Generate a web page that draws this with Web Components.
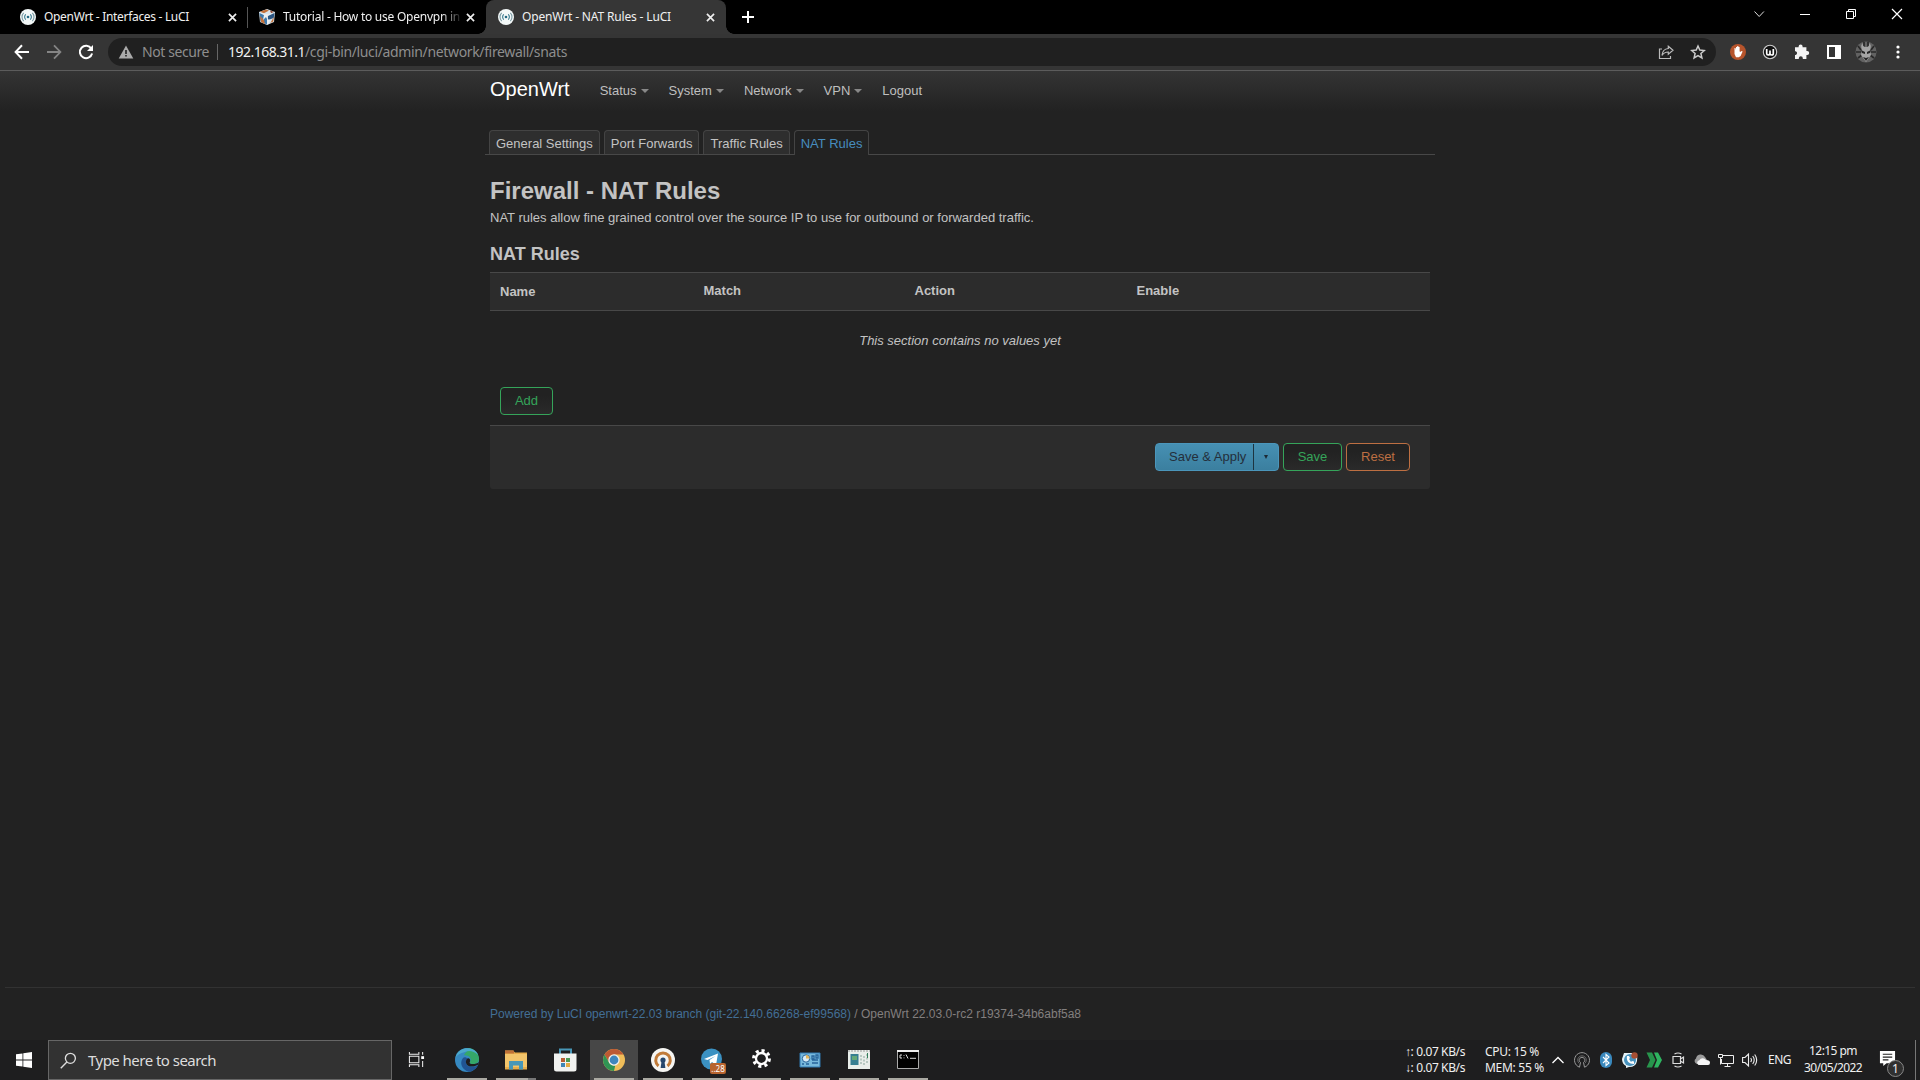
<!DOCTYPE html>
<html lang="en">
<head>
<meta charset="utf-8">
<title>OpenWrt - NAT Rules - LuCI</title>
<style>
  html, body {
    margin: 0;
    height: 100%;
    background: #222;
    overflow: hidden;
  }
  body {
    --ui-font: "Noto Sans", "Open Sans", sans-serif;
    --page-font: "Liberation Sans", Arial, sans-serif;
    display: flex;
    flex-direction: column;
    height: 1080px;
  }
</style>
</head>
<body>
<browser-frame></browser-frame>
<luci-page></luci-page>
<task-bar></task-bar>

<script>
const OPENWRT = `<circle cx="12" cy="12" r="12" fill="#f3f8f8"/><circle cx="12" cy="12" r="2" fill="#246a83"/>
  <g fill="none" stroke="#31758a" stroke-width="1.6"><path d="M8.7 8.2a5 5 0 0 0 0 7.6M15.3 8.2a5 5 0 0 1 0 7.6"/><path stroke="#7899a2" d="M5.5 5.8a9 9 0 0 0 0 12.4M18.5 5.8a9 9 0 0 1 0 12.4"/></g>`;

// name -> [viewBox size, markup]
const ICONS = {
  openwrt: [24, OPENWRT],
  cube: [16, `<path fill="#d8e4ec" d="M0 3 8 0l8 3-1 10-7 3-7-3z"/><path fill="#c4713a" d="M1 2.7 7 .6l3 1-5 2.6z"/><path fill="#8a3e26" d="M11 1.5l4 1.5-3 1z"/><path fill="#3c79ac" d="M.5 4 8 7v8.5l-6.5-3z"/><path fill="#2b5684" d="m9 7 6.5-3-.8 5-5.7 2z"/><path fill="#c4713a" d="m1 7 4 4 1 4-4-2zM14.8 8l-.5 4.6-3 1.3z"/><path fill="#eee" d="m1 4 4 2-1 5 3-3 1 2V7l5-2.5-4 .7zM8 10l3 1-2 4.5-1-.5z"/>`],
  close: [16, `<path d="m4.2 4.2 7.6 7.6m0-7.6-7.6 7.6" stroke="#eee" stroke-width="1.8" fill="none"/>`],
  plus: [16, `<path d="M8 2v12M2 8h12" stroke="#fff" stroke-width="2" fill="none"/>`],
  chevron: [16, `<path d="m3.5 5.5 4.7 5 4.7-5" stroke="#ddd" fill="none"/>`],
  minimize: [16, `<path d="M3 8.5h10" stroke="#fff" fill="none"/>`],
  restore: [16, `<path d="M3.5 5.5h7v7h-7zM5.5 5.5v-2h7v7h-2" stroke="#fff" fill="none"/>`],
  shut: [16, `<path d="m3 3 10 10M13 3 3 13" stroke="#fff" stroke-width="1.2" fill="none"/>`],
  back: [16, `<path d="M15 8H2M8 1.3 1.6 8 8 14.7" stroke="#fff" stroke-width="2" fill="none"/>`],
  forward: [16, `<path d="M1 8h13M8 1.3 14.4 8 8 14.7" stroke="#858585" stroke-width="1.8" fill="none"/>`],
  reload: [16, `<path d="M13.3 4.6A6.2 6.2 0 1 0 14.1 9.5" stroke="#fff" stroke-width="2" fill="none"/><path d="M15 1v6H9z" fill="#fff"/>`],
  warning: [16, `<path d="M8 1.5 15.3 14.5H.7z" fill="#aaa"/><path d="M7.2 6h1.6v4H7.2zm0 5h1.6v1.6H7.2z" fill="#222"/>`],
  share: [16, `<path d="M4 5H1.5v9.5h11V12" stroke="#bbb" stroke-width="1.2" fill="none"/><path d="M10.3 2.2 15 6.3l-4.7 4V8C7.5 8 5.5 9 4 11.4 4.3 7.5 6.5 4.9 10.3 4.5z" stroke="#bbb" stroke-width="1.2" fill="none"/>`],
  star: [16, `<path d="m8 2 1.8 4.1 4.5.4-3.4 3 1 4.4L8 11.6l-3.9 2.3 1-4.4-3.4-3 4.5-.4z" stroke="#ccc" stroke-width="1.5" fill="none"/>`],
  hand: [16, `<circle cx="8" cy="8" r="8" fill="#b6542c"/><path fill="#fff" d="M4.5 4h1l.5 2V3h1.2V2h1.2v1h1.2v4l.4 1 1.8-1 .8.5-2 4.5-1.8 1.3H6L4.5 10z"/>`],
  wicon: [16, `<circle cx="8" cy="8" r="6.7" fill="#111" stroke="#ccc" stroke-width="1.1"/><path d="M4.7 5v4.5q0 1.5 1.5 1.5T8 9.5V6.5v3q.2 1.5 1.8 1.5t1.5-1.5V5" stroke="#fff" stroke-width="1.7" fill="none"/>`],
  puzzle: [16, `<path fill="#f4f4f4" d="M1 3.3h3.6V2.6a2 2 0 0 1 4 0v.7h3.8V7h.8a2 2 0 0 1 0 4h-.8v4H8.8v-.8a2 2 0 0 0-4 0v.8H1v-4h.7a2 2 0 0 0 0-3.8H1z"/>`],
  panel: [16, `<path d="M1 1h14v14H1zM3 3v10h6V3z" fill="#fff" fill-rule="evenodd"/>`],
  avatar: [22, `<circle cx="11" cy="11" r="10.5" fill="#626262"/><path d="M3 5l3 4M19 5l-3 4M1 11h5M21 11h-5M3 17l4-3M19 17l-4-3M9 1v5M13 1v5" stroke="#282828" stroke-width="1.7"/><path d="M7 9q-2-5 1-7-1 4 3 4t3-4q3 2 1 7l1 5-5 7-5-7z" fill="#a5a5a5"/><path d="m6 9 4 2v2l-3-1zm10 0-4 2v2l3-1zM8 16l3 1 3-1-3 4z" fill="#252525"/>`],
  dots: [16, `<g fill="#fff"><circle cx="8" cy="3" r="1.6"/><circle cx="8" cy="8" r="1.6"/><circle cx="8" cy="13" r="1.6"/></g>`],
  windows: [16, `<path fill="#fff" d="M0 2.3 6.5 1.4v6.2H0zM7.3 1.3 16 0v7.6H7.3zM0 8.4h6.5v6.2L0 13.7zM7.3 8.4H16V16l-8.7-1.3z"/>`],
  search: [18, `<circle cx="11" cy="6.7" r="5.3" stroke="#ddd" stroke-width="1.4" fill="none"/><path d="M7.3 10.7.8 17.2" stroke="#ddd" stroke-width="1.5"/>`],
  taskview: [18, `<path d="M1.5 1v2.5h10V1M1.5 17v-2.5h10V17M1.5 5.5h10v7h-10zM15.5 1v3m0 6.5V17" stroke="#eee" stroke-width="1.1" fill="none"/><path d="M14 5.5h3v3h-3z" fill="#fff"/>`],
  edge: [24, `<circle cx="12" cy="12" r="12" fill="#3689c1"/><path d="M13 0c7 .4 11 5.5 11 11 0 3-2.4 5-5.7 5-3 0-4.3-1.2-3.3-2.6 2.2-3-1-6.8-6-6.2C10 4 14 3 13 0z" fill="#35a869"/><path d="M1 8C3 2 9-.4 14 .3c5 .7 8 4 9 6.7C19 3 14 2 10 4 5 5 2 7 .2 10z" fill="#4ba9cc"/><path d="M8 10c-4 5-1 12 6 13.8 4-.4 7.7-3.4 9-6.8-4 3-11 2.5-12-2-.5-2 .4-3.5 1.5-4.3C11 9 9 9 8 10z" fill="#205493"/><path d="M12.5 10.5c-1.2 1-2 2.5-1.5 4.5 1 3 4 4 7 3.5 2-.2 3.6-1 5-1.8L24 14c-3 2.7-11 3-9-.6.7-1.4-.8-3.8-2.5-2.9z" fill="#1e1e20"/>`],
  explorer: [24, `<path d="M1 2.5h8l2 2h12v17H1z" fill="#e8ad4a"/><path d="M1 2.5h9v3H1z" fill="#bf7138"/><path d="M1 6h22v13H1z" fill="#f3c56b"/><path d="M5 13h14v8.5h-4v-4H9v4H5z" fill="#4897b8"/>`],
  store: [24, `<path d="M7 6V1.5h11V6" fill="none" stroke="#4897b8" stroke-width="2"/><path d="M1 5.5h22.5V21q0 2.5-2.5 2.5H3.5Q1 23.5 1 21z" fill="#f1f2f0"/><path d="M8 10h4v4H8z" fill="#b85e32"/><path d="M13 10h4v4h-4z" fill="#4c9b53"/><path d="M8 15h4v4H8z" fill="#3f86b6"/><path d="M13 15h4v4h-4z" fill="#e5ac43"/>`],
  chrome: [24, `<circle cx="12" cy="12" r="11" fill="#efbd59"/><path d="M2.5 6.5A11 11 0 0 1 21.5 6.5H12L7.2 14.7z" fill="#bd5a34"/><path d="M2.5 6.5 7.2 14.7q2 3 6 3L12 23A11 11 0 0 1 2.5 6.5z" fill="#309454"/><circle cx="12" cy="12" r="5.7" fill="#f1f1ee"/><circle cx="12" cy="12" r="4.4" fill="#3f86bd"/>`],
  openvpn: [24, `<circle cx="12" cy="12" r="12" fill="#f5f5f2"/><path d="M7.5 18a7.3 7.3 0 1 1 9 0" fill="none" stroke="#c17b39" stroke-width="3"/><circle cx="12" cy="12" r="2.6" fill="#25476d"/><path d="M10.6 13h2.8l1 7H9.6z" fill="#25476d"/>`],
  telegram: [24, `<circle cx="11.5" cy="11" r="10.5" fill="#3b91c2"/><path d="m4 11 14-5.5L16 17l-4-3-2 2-.5-4 6-4-8 4z" fill="#fff"/>`],
  gear: [24, `<path fill="none" stroke="#fff" stroke-width="3.6" stroke-dasharray="3.5 3.57" d="M12 3a9 9 0 1 1 0 18 9 9 0 1 1 0-18"/><circle cx="12" cy="12" r="6.3" stroke="#fff" stroke-width="2.6" fill="none"/>`],
  control: [24, `<path d="M2 5h20v14H2z" fill="#77b9dc" stroke="#2f79b2"/><circle cx="8" cy="10.5" r="3.7" fill="#d8edf7" stroke="#27649a"/><path d="M8 10.5V7a3.5 3.5 0 0 1 3.5 3.5z" fill="#e4b65b"/><path d="M14 8h2v3h-2zm4-1h2v3h-2zM14 12h6m-6 3h6M4 16h2m2 0h3" stroke="#27649a" stroke-width="1.3" fill="none"/>`],
  console: [24, `<path d="M1 2h22v19H1z" fill="#e9eeea"/><path d="M1 3h22" stroke="#999" stroke-dasharray="2 1"/><path d="M3.5 6h8v11h-8z" fill="#377f91"/><path d="M5 8h5v4H5z" fill="#65a878"/><path d="M14 7v9m3-8v9m3-11v9" stroke="#87a49a" stroke-dasharray="2 1.5"/><path d="M20.5 5v5" stroke="#34805b"/>`],
  cmd: [24, `<path d="M1.5 2.5h21v18h-21z" fill="#000" stroke="#aaa"/><path d="M1 3h22" stroke="#eee" stroke-width="2"/><path d="M6 7H4v3h2m2-3v.8m0 1.7v.8M10 6.5l2 4m2-.2h6" stroke="#ddd" fill="none"/>`],
  up: [16, `<path d="m2.5 11 5.5-5.5 5.5 5.5" stroke="#fff" stroke-width="1.3" fill="none"/>`],
  vpn: [16, `<path d="M5.5 15.2a7.5 7.5 0 1 1 5 0l-1-4.7a2.8 2.8 0 1 0-3 0z" stroke="#999" fill="none"/><path d="M5 11.2a4.3 4.3 0 1 1 6 0" stroke="#777" fill="none" stroke-width=".8"/>`],
  bluetooth: [16, `<rect x="2" width="12" height="16" rx="6" fill="#3988bd"/><path d="m5 5 6 6-3 2.5v-11L11 5l-6 6" stroke="#fff" stroke-width="1.1" fill="none"/>`],
  phone: [16, `<path d="M2 1h11q3 2 2 8t-8 6l-3 1v-2Q0 12 0 7z" fill="#e5f2f7"/><circle cx="8" cy="8" r="6" fill="#4792be"/><path d="M5 4c-1 5 2 8 7 8V9.5L10 9l-1 1-2-3 1-1L7 4z" fill="#fff"/><circle cx="12.5" cy="3.5" r="3.2" fill="#a74f34"/>`],
  green: [16, `<path d="M.5.5h5.5L9.500 8 6 15.500H.5L4 8z" fill="#27954c"/><path d="M8 .5h4L16 8l-4 7.500H8L11 8z" fill="#2eb560"/>`],
  camera: [16, `<path d="M3 4.500h7.500v7H3zM10.500 7 13.500 5v6l-3-2M4.500 2q3.500-2 7 0M4.500 14q3.500 2 7 0" stroke="#ddd" stroke-width="1.2" fill="none"/>`],
  cloud: [16, `<path d="M3 12a3 3 0 0 1-1-5.500A4.800 4.800 0 0 1 11 5l2 3-5 4z" fill="#9b9b9b"/><path d="M4.500 13a2.500 2.500 0 0 1 .8-4.700A4 4 0 0 1 12 8q4 0 4 2.700T13.500 13z" fill="#f5f5f5"/>`],
  network: [16, `<path d="M4.500 3.500h11v8h-12V7M9.500 11.500v3m-3 0h6M.5 2.500h4v3h-4zM2.500 5.500v7" stroke="#eee" fill="none"/>`],
  volume: [16, `<path d="M.6 5.500H3l3.500-3.500v12L3 10.500H.6zM8.700 6q1.500 2 0 4m2-6q3 4 0 8m2-9.500q4 5.500 0 11" stroke="#eee" stroke-width="1.1" fill="none"/>`],
  note: [18, `<path d="M1 1h16v13H8l-3.500 3v-3H1z" fill="#fff"/><path d="M4 4.500h10M4 7.500h10M4 10.500h6" stroke="#222" stroke-width="1.2"/>`]
};

/**
 * <ui-icon name="star" size="16"></ui-icon>
 */
class UiIcon extends HTMLElement {
  connectedCallback() {
    if (this.shadowRoot) return;
    const size = this.getAttribute("size") || 16;
    const [box, markup] = ICONS[this.getAttribute("name")];
    this.attachShadow({ mode: "open" }).innerHTML = `
      <style>
        :host { display: block; flex: none; width: ${size}px; height: ${size}px; }
        svg { display: block; }
      </style>
      <svg width="${size}" height="${size}" viewBox="0 0 ${box} ${box}">${markup}</svg>`;
  }
}
customElements.define("ui-icon", UiIcon);

/**
 * Single line label that tracks its letters to fill a given width.
 * <fit-label width="145">Text</fit-label>
 */
class FitLabel extends HTMLElement {
  connectedCallback() {
    if (this.shadowRoot) return;
    this.attachShadow({ mode: "open" }).innerHTML = `
      <style>
        :host { display: inline-block; flex: none; }
        span { display: inline-block; white-space: pre; }
      </style>
      <span><slot></slot></span>`;
    const span = this.shadowRoot.querySelector("span");
    const natural = span.getBoundingClientRect().width;
    const width = Number(this.getAttribute("width"));
    if (natural && width) {
      span.style.letterSpacing = (width - natural) / this.textContent.length + "px";
      this.style.width = width + "px";
    }
  }
}
customElements.define("fit-label", FitLabel);

class BrowserTab extends HTMLElement {
  connectedCallback() {
    this.attachShadow({ mode: "open" }).innerHTML = `
      <style>
        :host {
          display: flex;
          align-items: center;
          box-sizing: border-box;
          width: 240px;
          height: 34px;
          padding: 0 7px 0 12px;
          border-right: 1px solid transparent;
          position: relative;
        }
        :host([divided]) {
          border-image: linear-gradient(#000 8px, #555 8px, #555 27px, #000 27px) 1;
          border-width: 0 1px 0 0;
        }
        :host([faded]) { width: 238px; padding-left: 11px; }
        :host([active]) { background: #363636; border-radius: 8px 8px 0 0; }
        :host([active])::before, :host([active])::after {
          content: "";
          position: absolute;
          bottom: 0;
          width: 8px;
          height: 8px;
        }
        :host([active])::before { left: -8px; background: radial-gradient(circle at 0 0, transparent 7.5px, #363636 8px); }
        :host([active])::after { right: -9px; background: radial-gradient(circle at 100% 0, transparent 7.5px, #363636 8px); }
        .title {
          flex: 1;
          height: 18px;
          margin: 0 2px 0 8px;
          overflow: hidden;
          font-size: 12px;
          line-height: 18px;
          color: #f0f0f0;
        }
        :host([faded]) .title { -webkit-mask-image: linear-gradient(90deg, #000 158px, transparent 180px); }
      </style>
      <ui-icon name="${this.getAttribute("icon")}"></ui-icon>
      <div class="title"><slot></slot></div>
      <ui-icon name="close" size="15"></ui-icon>`;
  }
}
customElements.define("browser-tab", BrowserTab);

class BrowserFrame extends HTMLElement {
  connectedCallback() {
    this.attachShadow({ mode: "open" }).innerHTML = `
      <style>
        :host { display: block; flex: none; font-family: var(--ui-font); }
        .strip { display: flex; height: 34px; padding-left: 8px; background: #000; }
        .new { margin: 9px 0 0 14px; }
        .window { display: flex; gap: 30px; margin: 6px 15px 0 auto; }
        .bar {
          display: flex;
          align-items: center;
          height: 36px;
          background: #353535;
          border-bottom: 1px solid #5c5c5c;
        }
        .nav { display: flex; gap: 16px; width: 94px; padding-left: 14px; }
        .address {
          display: flex;
          align-items: center;
          box-sizing: border-box;
          width: 1608px;
          height: 28px;
          padding: 0 10px;
          border-radius: 14px;
          background: #202020;
          color: #8e8e8e;
          font-size: 14px;
          line-height: 20px;
        }
        .state { margin-left: 8px; }
        .rule { width: 1px; height: 16px; margin: 0 10px 0 8px; background: #666; }
        .host { color: #f2f2f2; }
        .share { margin-left: auto; }
        .star { margin-left: 16px; }
        .tools { display: flex; align-items: center; gap: 16px; margin-left: 14px; }
        .avatar { margin: 0 -3px; }
      </style>
      <div class="strip">
        <browser-tab icon="openwrt" divided><fit-label width="145">OpenWrt - Interfaces - LuCI</fit-label></browser-tab>
        <browser-tab icon="cube" faded><fit-label width="177">Tutorial - How to use Openvpn in</fit-label></browser-tab>
        <browser-tab icon="openwrt" active><fit-label width="149">OpenWrt - NAT Rules - LuCI</fit-label></browser-tab>
        <ui-icon class="new" name="plus"></ui-icon>
        <div class="window">
          <ui-icon name="chevron"></ui-icon>
          <ui-icon name="minimize"></ui-icon>
          <ui-icon name="restore"></ui-icon>
          <ui-icon name="shut"></ui-icon>
        </div>
      </div>
      <div class="bar">
        <div class="nav">
          <ui-icon name="back"></ui-icon>
          <ui-icon name="forward"></ui-icon>
          <ui-icon name="reload"></ui-icon>
        </div>
        <div class="address">
          <ui-icon name="warning"></ui-icon>
          <fit-label class="state" width="67">Not secure</fit-label>
          <span class="rule"></span>
          <fit-label class="host" width="77">192.168.31.1</fit-label><fit-label width="262">/cgi-bin/luci/admin/network/firewall/snats</fit-label>
          <ui-icon class="share" name="share"></ui-icon>
          <ui-icon class="star" name="star"></ui-icon>
        </div>
        <div class="tools">
          <ui-icon name="hand"></ui-icon>
          <ui-icon name="wicon"></ui-icon>
          <ui-icon name="puzzle"></ui-icon>
          <ui-icon name="panel"></ui-icon>
          <ui-icon class="avatar" name="avatar" size="22"></ui-icon>
          <ui-icon name="dots"></ui-icon>
        </div>
      </div>`;
  }
}
customElements.define("browser-frame", BrowserFrame);

/**
 * <luci-button kind="positive">Save</luci-button>
 */
class LuciButton extends HTMLElement {
  connectedCallback() {
    this.attachShadow({ mode: "open" }).innerHTML = `
      <style>
        :host { display: inline-block; }
        button {
          display: block;
          box-sizing: border-box;
          height: 28px;
          width: var(--w);
          padding: 0;
          border: 1px solid currentColor;
          border-radius: 4px;
          background: linear-gradient(#222, #222 30%, #2a2a2a);
          color: #35a45a;
          font: 13px/26px var(--page-font);
        }
        :host([kind="negative"]) button { color: #bd6f42; }
      </style>
      <button><slot></slot></button>`;
  }
}
customElements.define("luci-button", LuciButton);

/**
 * Split button with a drop down arrow on its right side.
 */
class LuciCombo extends HTMLElement {
  connectedCallback() {
    this.attachShadow({ mode: "open" }).innerHTML = `
      <style>
        :host {
          display: flex;
          box-sizing: border-box;
          width: 124px;
          height: 28px;
          border: 1px solid #4b96bb;
          border-radius: 4px;
          background: linear-gradient(#4690b3, #3b7f9f);
          color: #242f3b;
          font: 13px/26px var(--page-font);
        }
        .label { width: 98px; padding-left: 13px; box-sizing: border-box; border-right: 1px solid #1d3440; white-space: nowrap; }
        .arrow { flex: 1; display: grid; place-items: center; }
        i { border: 2.5px solid transparent; border-top: 4px solid #1c2a35; border-bottom: 0; }
      </style>
      <span class="label"><slot></slot></span>
      <span class="arrow"><i></i></span>`;
  }
}
customElements.define("luci-combo", LuciCombo);

class LuciHeader extends HTMLElement {
  connectedCallback() {
    this.attachShadow({ mode: "open" }).innerHTML = `
      <style>
        :host { display: block; height: 40px; background: linear-gradient(#343434, #222); }
        nav {
          display: flex;
          align-items: flex-start;
          width: 940px;
          margin: 0 auto;
          padding-top: 8px;
          line-height: 20px;
          color: #bfbfbf;
        }
        .brand { margin-right: 30px; font-size: 20px; color: #fff; }
        .item { margin: 2px 20px 0 0; }
        .menu::after {
          content: "";
          display: inline-block;
          margin-left: 4px;
          vertical-align: 2px;
          border: 4px solid transparent;
          border-top-color: #888;
          border-bottom: 0;
        }
      </style>
      <nav>
        <span class="brand">OpenWrt</span>
        <span class="item menu">Status</span>
        <span class="item menu">System</span>
        <span class="item menu">Network</span>
        <span class="item menu">VPN</span>
        <span class="item">Logout</span>
      </nav>`;
  }
}
customElements.define("luci-header", LuciHeader);

class LuciTabs extends HTMLElement {
  connectedCallback() {
    this.attachShadow({ mode: "open" }).innerHTML = `
      <style>
        :host {
          display: flex;
          gap: 4px;
          box-sizing: border-box;
          height: 25px;
          margin: 19px -5px 0;
          padding-left: 4px;
          border-bottom: 1px solid #484848;
          line-height: 17px;
        }
        span {
          box-sizing: border-box;
          height: 24px;
          padding: 4px 6px 0;
          border: 1px solid #444;
          border-bottom: 0;
          border-radius: 4px 4px 0 0;
          background: #2e2e2e;
          text-align: center;
        }
        .active { height: 25px; background: #222; color: #478dbf; }
      </style>
      <span>General Settings</span>
      <span>Port Forwards</span>
      <span>Traffic Rules</span>
      <span class="active">NAT Rules</span>`;
  }
}
customElements.define("luci-tabs", LuciTabs);

class RuleTable extends HTMLElement {
  connectedCallback() {
    this.attachShadow({ mode: "open" }).innerHTML = `
      <style>
        :host { display: block; line-height: 17px; }
        .head {
          display: grid;
          grid-template-columns: 203.5px 211px 222px 1fr;
          height: 37px;
          border: 1px solid #484848;
          border-width: 1px 0;
          background: #2c2c2c;
          font-weight: bold;
        }
        .head span { padding: 9px 0 0 10px; }
        .head span:first-child { padding-top: 10px; }
        .empty { height: 39px; padding-top: 21px; text-align: center; font-style: italic; }
        .add { padding: 16px 10px 10px; height: 28px; }
      </style>
      <div class="head"><span>Name</span><span>Match</span><span>Action</span><span>Enable</span></div>
      <div class="empty">This section contains no values yet</div>
      <div class="add"><luci-button style="--w: 53px">Add</luci-button></div>`;
  }
}
customElements.define("rule-table", RuleTable);

class LuciPage extends HTMLElement {
  connectedCallback() {
    this.attachShadow({ mode: "open" }).innerHTML = `
      <style>
        :host {
          display: flex;
          flex-direction: column;
          flex: 1;
          background: #222;
          color: #c3c3c3;
          font: 13px/18px var(--page-font);
        }
        main { width: 940px; margin: 0 auto; }
        h2 { margin: 18px 0 0; font-size: 24px; line-height: 36px; }
        h3 { margin: 9px 0 0; font-size: 18px; line-height: 36px; }
        p { margin: 0; }
        .actions {
          display: flex;
          justify-content: flex-end;
          gap: 4px;
          box-sizing: border-box;
          height: 64px;
          padding: 17px 20px;
          border-top: 1px solid #484848;
          border-radius: 0 0 3px 3px;
          background: #2c2c2c;
        }
        footer {
          height: 52px;
          margin: auto 5px 0;
          border-top: 1px solid #323232;
          color: #827f7f;
          font-size: 12px;
        }
        footer div { width: 940px; margin: 17px auto 0; }
        .link { color: #426f96; }
      </style>
      <luci-header></luci-header>
      <main>
        <luci-tabs></luci-tabs>
        <h2>Firewall - NAT Rules</h2>
        <p>NAT rules allow fine grained control over the source IP to use for outbound or forwarded traffic.</p>
        <h3>NAT Rules</h3>
        <rule-table></rule-table>
        <div class="actions">
          <luci-combo>Save &amp; Apply</luci-combo>
          <luci-button style="--w: 59px">Save</luci-button>
          <luci-button kind="negative" style="--w: 64px">Reset</luci-button>
        </div>
      </main>
      <footer><div><fit-label class="link" width="361">Powered by LuCI openwrt-22.03 branch (git-22.140.66268-ef99568)</fit-label><fit-label width="230"> / OpenWrt 22.03.0-rc2 r19374-34b6abf5a8</fit-label></div></footer>`;
  }
}
customElements.define("luci-page", LuciPage);

/**
 * Taskbar button. "open" draws the line below a running program.
 */
class TaskApp extends HTMLElement {
  connectedCallback() {
    this.attachShadow({ mode: "open" }).innerHTML = `
      <style>
        :host {
          display: flex;
          justify-content: center;
          box-sizing: border-box;
          position: relative;
          width: 48px;
          height: 40px;
          padding-top: 8px;
        }
        :host([open])::after {
          content: "";
          position: absolute;
          left: 4px;
          right: 4px;
          bottom: 0;
          height: 2px;
          background: #aaa9a2;
        }
        :host([stacked])::after { background: linear-gradient(90deg, #aaa9a2 32px, #777 32px); }
        :host([active]) { background: #474747; }
        b {
          position: absolute;
          left: 22px;
          top: 23px;
          width: 16px;
          height: 11px;
          border-radius: 2px;
          background: #b8642f;
          color: #fff;
          font: 8px/11px var(--ui-font);
          text-align: center;
        }
      </style>
      <ui-icon name="${this.getAttribute("icon")}" size="${this.getAttribute("size") || 24}"></ui-icon>
      ${this.hasAttribute("badge") ? `<b>${this.getAttribute("badge")}</b>` : ""}`;
  }
}
customElements.define("task-app", TaskApp);

class TaskBar extends HTMLElement {
  connectedCallback() {
    this.attachShadow({ mode: "open" }).innerHTML = `
      <style>
        :host {
          display: flex;
          flex: none;
          height: 40px;
          background: #1e1e1f;
          color: #f0f0f0;
          font-family: var(--ui-font);
          font-size: 12px;
          line-height: 16px;
        }
        .start { width: 32px; padding: 12px 0 0 16px; }
        .search {
          display: flex;
          align-items: center;
          gap: 11px;
          box-sizing: border-box;
          width: 344px;
          height: 40px;
          padding-left: 11px;
          border: 1px solid #666;
          background: #323232;
          color: #ddd;
          font-size: 15px;
          line-height: 20px;
        }
        .view { width: 35px; padding: 11px 0 0 16px; }
        .apps { display: flex; gap: 1px; }
        .tray { display: flex; margin-left: auto; }
        .meter { display: grid; align-content: start; padding-top: 4px; }
        .net { width: 80px; }
        .cpu { width: 65px; }
        .icons { display: flex; gap: 8px; padding-top: 12px; }
        .lang { margin: 12px 13px 0 10px; }
        .clock { display: grid; justify-items: center; align-content: start; grid-auto-rows: 17px; padding-top: 3px; }
        .note { position: relative; width: 36px; padding: 10px 0 0 17px; }
        .count {
          position: absolute;
          left: 25px;
          top: 20px;
          width: 15px;
          height: 15px;
          border: 1px solid #888;
          border-radius: 50%;
          background: #303030;
          line-height: 15px;
          text-align: center;
        }
        .desktop { width: 4px; border-left: 1px solid #777; }
      </style>
      <div class="start"><ui-icon name="windows"></ui-icon></div>
      <div class="search"><ui-icon name="search" size="17"></ui-icon><fit-label width="128">Type here to search</fit-label></div>
      <div class="view"><ui-icon name="taskview" size="17"></ui-icon></div>
      <div class="apps">
        <task-app icon="edge" open></task-app>
        <task-app icon="explorer" open stacked></task-app>
        <task-app icon="store"></task-app>
        <task-app icon="chrome" open active></task-app>
        <task-app icon="openvpn" open></task-app>
        <task-app icon="telegram" badge="..28" open></task-app>
        <task-app icon="gear" size="21" open></task-app>
        <task-app icon="control" open></task-app>
        <task-app icon="console" open></task-app>
        <task-app icon="cmd" open></task-app>
      </div>
      <div class="tray">
        <div class="meter net"><fit-label width="60">↑: 0.07 KB/s</fit-label><fit-label width="60">↓: 0.07 KB/s</fit-label></div>
        <div class="meter cpu"><fit-label width="54">CPU: 15 %</fit-label><fit-label width="59">MEM: 55 %</fit-label></div>
        <div class="icons">
          <ui-icon name="up"></ui-icon>
          <ui-icon name="vpn"></ui-icon>
          <ui-icon name="bluetooth"></ui-icon>
          <ui-icon name="phone"></ui-icon>
          <ui-icon name="green"></ui-icon>
          <ui-icon name="camera"></ui-icon>
          <ui-icon name="cloud"></ui-icon>
          <ui-icon name="network"></ui-icon>
          <ui-icon name="volume"></ui-icon>
        </div>
        <fit-label class="lang" width="23">ENG</fit-label>
        <div class="clock"><fit-label width="48">12:15 pm</fit-label><fit-label width="58">30/05/2022</fit-label></div>
        <div class="note"><ui-icon name="note" size="17"></ui-icon><span class="count">1</span></div>
        <div class="desktop"></div>
      </div>`;
  }
}
customElements.define("task-bar", TaskBar);
</script>
</body>
</html>
